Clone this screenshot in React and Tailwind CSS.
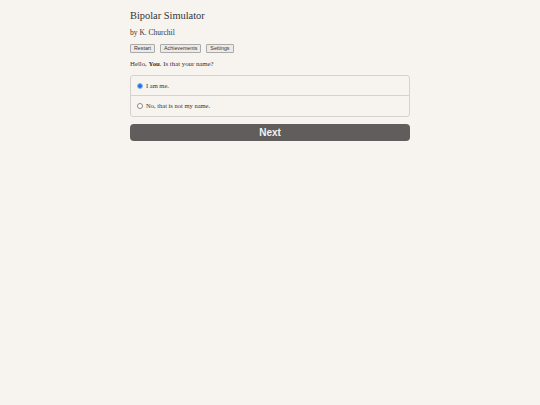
import React from 'react';

const App = () => {
  return (
    <div className="w-[540px] h-[405px] bg-[#f7f4f0] font-['Liberation_Serif',serif] text-[#333]">
      <div className="w-[280px] mx-auto pt-[9px]">
        <h1 className="text-[10.4px] leading-[13px] text-[#333]">Bipolar Simulator</h1>
        <p className="text-[7.5px] leading-[9px] mt-[6px]">by K. Churchil</p>

        <div className="flex gap-[5px] mt-[7px]">
          {['Restart', 'Achievements', 'Settings'].map((label) => (
            <button
              key={label}
              className="h-[9px] px-[3px] border border-[#aaa] bg-[#eeeae6] rounded-[1px] font-['Liberation_Sans',sans-serif] text-[5.3px] leading-[7px] text-[#333]"
            >
              {label}
            </button>
          ))}
        </div>

        <p className="text-[6.8px] leading-[9px] mt-[6px]">
          Hello, <b>You</b>. Is that your name?
        </p>

        <div className="mt-[7px] border border-[#d6d2cf] rounded-[3px] text-[6.5px]">
          <label className="flex items-center gap-[3px] h-[20px] px-[6px] border-b border-[#d6d2cf]">
            <span className="w-[6px] h-[6px] rounded-full bg-[#1a73e8] border border-[#8fb8ef]"></span>
            I am me.
          </label>
          <label className="flex items-center gap-[3px] h-[20px] px-[6px]">
            <span className="w-[6px] h-[6px] rounded-full border border-[#888] bg-white"></span>
            No, that is not my name.
          </label>
        </div>

        <button className="mt-[7px] w-full h-[17px] rounded-[4px] bg-[#5f5e5c] text-[#f2f2f2] font-['Liberation_Sans',sans-serif] font-bold text-[10px] leading-[17px]">
          Next
        </button>
      </div>
    </div>
  );
};

export default App;
